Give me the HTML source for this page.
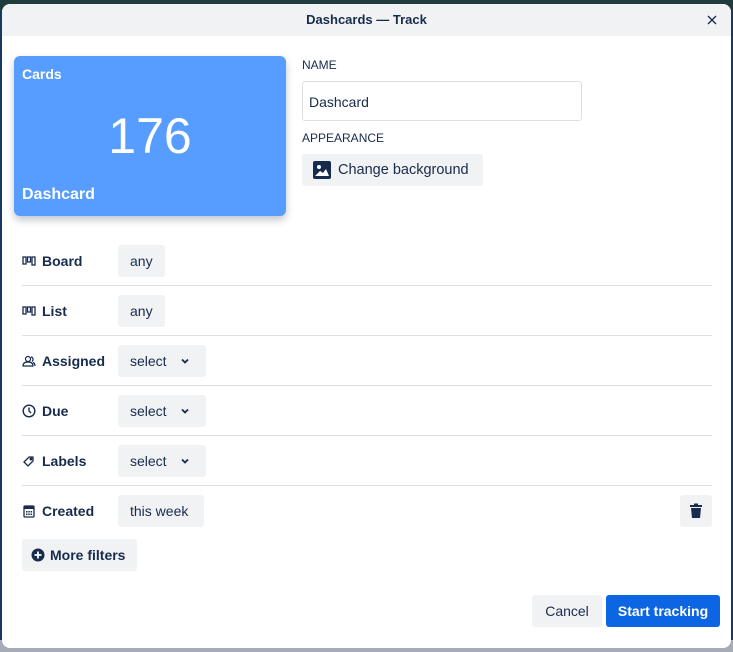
<!DOCTYPE html>
<html><head><meta charset="utf-8"><style>
*{box-sizing:border-box;margin:0;padding:0}
body{width:733px;height:652px;overflow:hidden;background:#173a63;font-family:"Liberation Sans",sans-serif;color:#172b4d;position:relative}
.bg1{position:absolute;left:0;top:0;width:733px;height:10px;background:#1f3b3c}
.bgb{position:absolute;left:0;top:640px;width:733px;height:12px;background:#a5acb8}
.modal{position:absolute;left:2px;top:4px;width:729px;height:644px;background:#fff;border-radius:8px;overflow:hidden}
.hdr{height:32px;background:#f1f2f4;text-align:center;font-weight:bold;font-size:13px;line-height:32px}
.x{position:absolute;right:12px;top:9px}
.card{position:absolute;left:12px;top:52px;width:272px;height:160px;background:#579dff;border-radius:6px;box-shadow:0 4px 8px rgba(9,30,66,.25);color:#fff}
.card .t{position:absolute;left:8px;top:10px;font-weight:bold;font-size:14px}
.card .n{position:absolute;left:0;right:0;top:51px;text-align:center;font-size:50px}
.card .b{position:absolute;left:8px;top:130px;font-weight:bold;font-size:16px}
.lbl{position:absolute;left:300px;font-size:12px}
.inp{position:absolute;left:300px;top:77px;width:280px;height:40px;border:1px solid #dcdfe4;border-radius:3px;font-size:14px;padding:12px 6px}
.btn{position:absolute;background:#f1f2f4;border-radius:3px;font-size:14px;height:32px;line-height:32px}
.row{position:absolute;left:20px;width:690px;height:50px}
.row .ic{position:absolute;left:0;top:9px}
.row .l{position:absolute;left:20px;top:8px;font-weight:bold;font-size:14px}
.row .btn{left:96px;top:0;padding:0 12px}
.row .sel{width:88px}
.sel svg{position:absolute;left:63px;top:13px}
.div{position:absolute;left:20px;width:690px;height:1px;background:#dcdfe4}
</style></head><body>
<div class="bg1"></div><div class="bgb"></div>
<div class="modal">
<div class="hdr">Dashcards — Track</div>
<svg class="x" width="14" height="14" viewBox="0 0 14 14"><path d="M3 3L11 11M11 3L3 11" stroke="#172b4d" stroke-width="1.3"/></svg>
<div class="card"><div class="t">Cards</div><div class="n">176</div><div class="b">Dashcard</div></div>
<div class="lbl" style="top:54px">NAME</div>
<div class="inp">Dashcard</div>
<div class="lbl" style="top:127px">APPEARANCE</div>
<div class="btn" style="left:300px;top:150px;width:181px;padding-left:36px;font-size:14.5px">Change background</div>
<svg style="position:absolute;left:311px;top:157px" width="18" height="18" viewBox="0 0 18 18"><rect width="18" height="18" rx="2" fill="#172b4d"/><circle cx="6" cy="6" r="2" fill="#fff"/><path d="M2 15L7 10L10 12L13 8L16 15Z" fill="#fff"/></svg>

<div class="row" style="top:241px"><svg class="ic" width="14" height="14" viewBox="0 0 14 14"><g fill="none" stroke="#172b4d" stroke-width="1.3"><rect x="1" y="3" width="3" height="7"/><rect x="5.5" y="3" width="3" height="5"/><rect x="10" y="3" width="3" height="8"/></g></svg><div class="l">Board</div><div class="btn">any</div></div>
<div class="div" style="top:281px"></div>
<div class="row" style="top:291px"><svg class="ic" width="14" height="14" viewBox="0 0 14 14"><g fill="none" stroke="#172b4d" stroke-width="1.3"><rect x="1" y="3" width="3" height="7"/><rect x="5.5" y="3" width="3" height="5"/><rect x="10" y="3" width="3" height="8"/></g></svg><div class="l">List</div><div class="btn">any</div></div>
<div class="div" style="top:331px"></div>
<div class="row" style="top:341px"><svg class="ic" width="14" height="14" viewBox="0 0 14 14"><g fill="none" stroke="#172b4d" stroke-width="1.2"><circle cx="6" cy="5" r="2.5"/><path d="M1 12C1 9 3 8 6 8S11 9 11 12Z"/><path d="M9 3A2.5 2.5 0 0 1 10 7.5M11 8.5C12.5 9 13 10.5 13 12"/></g></svg><div class="l">Assigned</div><div class="btn sel">select<svg width="8" height="6" viewBox="0 0 8 6"><path d="M1 1.5L4 4.5L7 1.5" fill="none" stroke="#172b4d" stroke-width="1.8"/></svg></div></div>
<div class="div" style="top:381px"></div>
<div class="row" style="top:391px"><svg class="ic" width="14" height="14" viewBox="0 0 14 14"><g fill="none" stroke="#172b4d" stroke-width="1.4"><circle cx="7" cy="7" r="5.8"/><path d="M7 3.5V7L9 9"/></g></svg><div class="l">Due</div><div class="btn sel">select<svg width="8" height="6" viewBox="0 0 8 6"><path d="M1 1.5L4 4.5L7 1.5" fill="none" stroke="#172b4d" stroke-width="1.8"/></svg></div></div>
<div class="div" style="top:431px"></div>
<div class="row" style="top:441px"><svg class="ic" width="14" height="14" viewBox="0 0 14 14"><g fill="none" stroke="#172b4d" stroke-width="1.3"><path d="M2 8L7 3H11V7L6 12Z"/><circle cx="9" cy="5" r="0.8" fill="#172b4d"/></g></svg><div class="l">Labels</div><div class="btn sel">select<svg width="8" height="6" viewBox="0 0 8 6"><path d="M1 1.5L4 4.5L7 1.5" fill="none" stroke="#172b4d" stroke-width="1.8"/></svg></div></div>
<div class="div" style="top:481px"></div>
<div class="row" style="top:491px"><svg class="ic" width="14" height="14" viewBox="0 0 14 14"><rect x="2" y="2" width="10" height="11" rx="1" fill="none" stroke="#172b4d" stroke-width="1.3"/><rect x="2" y="2" width="10" height="3" fill="#172b4d"/><g fill="#172b4d"><rect x="4" y="7" width="1.5" height="1.5"/><rect x="6.3" y="7" width="1.5" height="1.5"/><rect x="8.6" y="7" width="1.5" height="1.5"/><rect x="4" y="9.5" width="1.5" height="1.5"/><rect x="6.3" y="9.5" width="1.5" height="1.5"/><rect x="8.6" y="9.5" width="1.5" height="1.5"/></g></svg><div class="l">Created</div><div class="btn" style="width:86px">this week</div>
<div class="btn" style="left:658px;width:32px"></div>
<svg style="position:absolute;left:666px;top:8px" width="16" height="16" viewBox="0 0 16 16"><rect x="2" y="2" width="12" height="2" fill="#172b4d"/><rect x="6" y="0.5" width="4" height="2" fill="#172b4d"/><path d="M3 5H13L12 15H4Z" fill="#172b4d"/></svg>
</div>
<div class="btn" style="left:20px;top:535px;width:115px;padding-left:28px;font-weight:bold;font-size:14px;background:#f1f2f4">More filters</div>
<svg style="position:absolute;left:29px;top:544px" width="14" height="14" viewBox="0 0 14 14"><circle cx="7" cy="7" r="6.5" fill="#172b4d"/><path d="M7 3.5V10.5M3.5 7H10.5" stroke="#fff" stroke-width="1.8"/></svg>
<div class="btn" style="left:530px;top:591px;width:70px;text-align:center">Cancel</div>
<div class="btn" style="left:604px;top:591px;width:114px;text-align:center;background:#0c66e4;color:#fff;font-weight:bold">Start tracking</div>
</div>
</body></html>
